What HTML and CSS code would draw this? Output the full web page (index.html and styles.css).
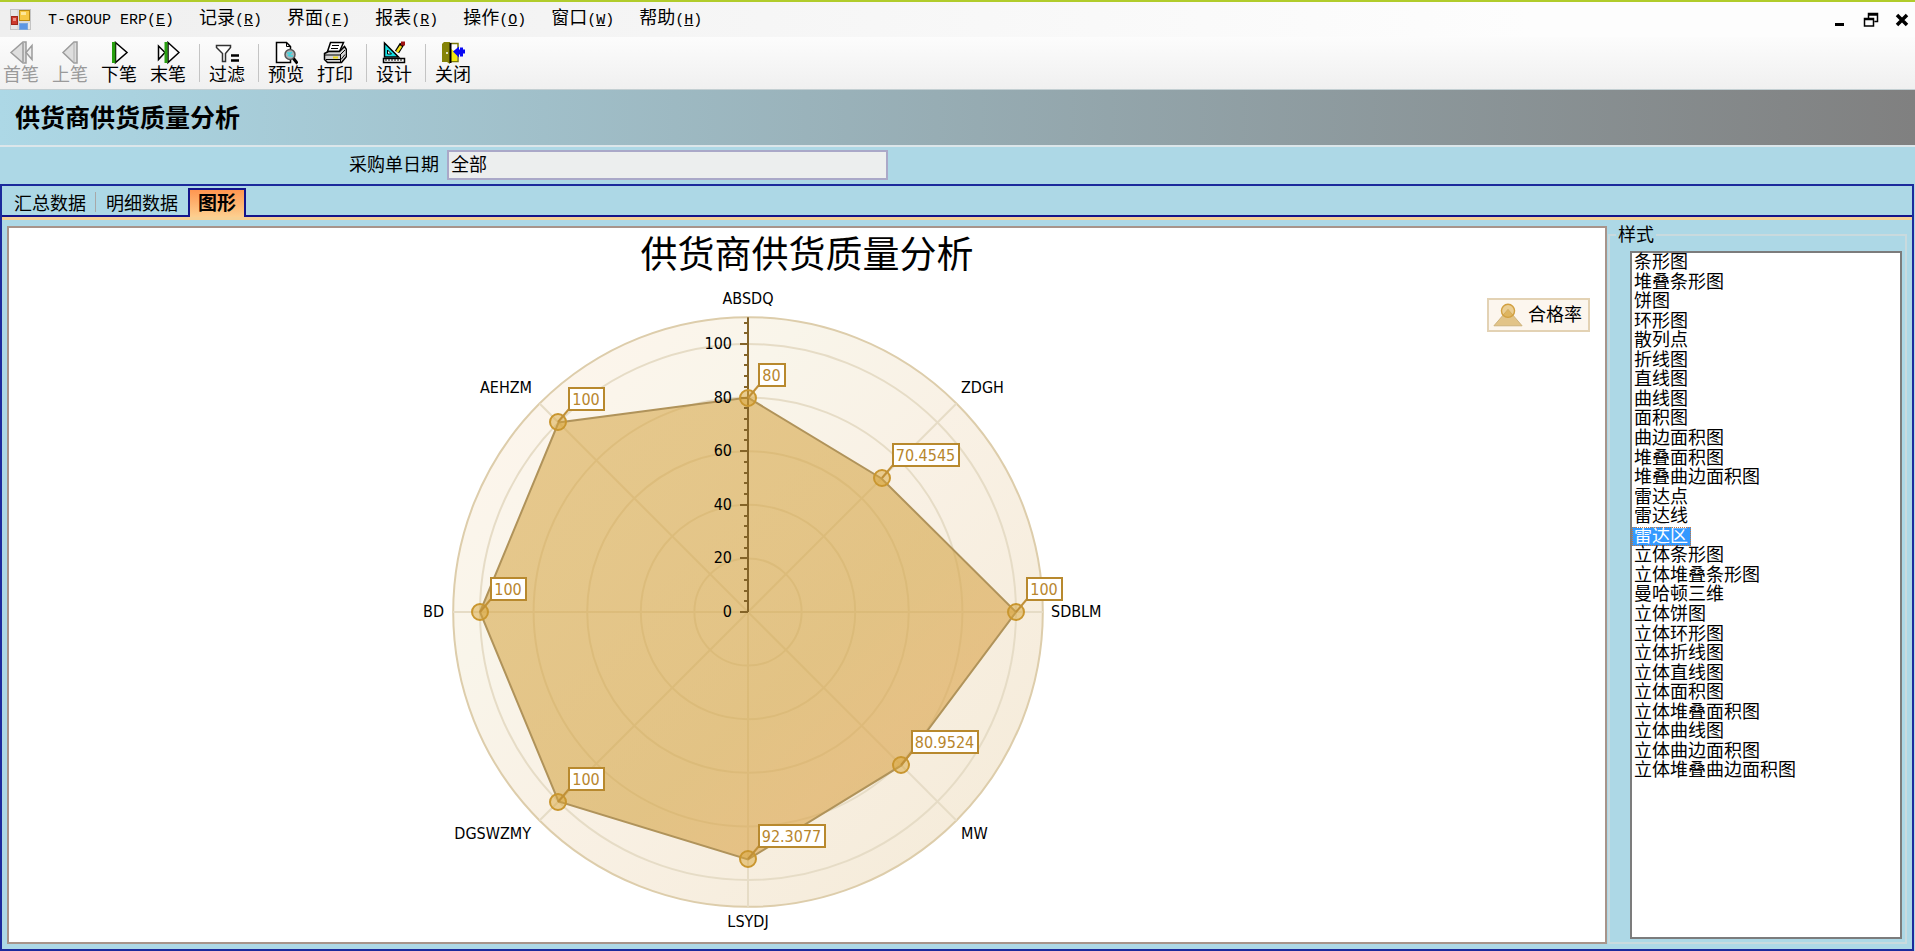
FILE: index.html
```html
<!DOCTYPE html>
<html lang="zh-CN">
<head>
<meta charset="utf-8">
<title>供货商供货质量分析</title>
<link rel="stylesheet" href="styles.css">
</head>
<body>
<header class="menubar">
  <svg class="app-icon" viewBox="0 0 22 22" aria-hidden="true">
    <rect x="0.5" y="0.5" width="20" height="20" fill="#e6e6e6" stroke="#c4c4c4"/>
    <path d="M8 1v20M1 13h19" stroke="#cfcfcf"/>
    <rect x="9.5" y="1.5" width="10" height="10" fill="#f6c844" stroke="#b98a12"/>
    <rect x="11" y="3" width="5" height="3" fill="#fde79a"/>
    <rect x="1.5" y="7.5" width="6" height="8" fill="#cc3a2c" stroke="#a12519"/>
    <rect x="3" y="9" width="3" height="3" fill="#ee8f84"/>
    <rect x="9.5" y="14.5" width="8" height="6" fill="#5c96e4" stroke="#7aa7de"/>
  </svg>
  <nav class="menu">
    <button class="menu-item"><span class="latin">T-GROUP ERP(<u>E</u>)</span></button>
    <button class="menu-item">记录<span class="latin">(<u>R</u>)</span></button>
    <button class="menu-item">界面<span class="latin">(<u>F</u>)</span></button>
    <button class="menu-item">报表<span class="latin">(<u>R</u>)</span></button>
    <button class="menu-item">操作<span class="latin">(<u>O</u>)</span></button>
    <button class="menu-item">窗口<span class="latin">(<u>W</u>)</span></button>
    <button class="menu-item">帮助<span class="latin">(<u>H</u>)</span></button>
  </nav>
  <div class="window-buttons">
    <button class="window-button" aria-label="最小化"><svg viewBox="0 0 16 16"><path d="M3 12.500h9" stroke="#000" stroke-width="3"/></svg></button>
    <button class="window-button" aria-label="还原"><svg viewBox="0 0 16 16"><path d="M5.500 6V1.500h9v8h-3M5 3h10M1.500 6.500h9v7.500h-9zM1 7.500h10" fill="none" stroke="#000" stroke-width="1.500"/></svg></button>
    <button class="window-button" aria-label="关闭"><svg viewBox="0 0 16 16"><path d="M3 3l10 10M13 3L3 13" stroke="#000" stroke-width="3.500"/></svg></button>
  </div>
</header>

<div class="toolbar" role="toolbar">
  <button class="tool" disabled>
    <svg viewBox="0 0 24 24"><path d="M2 11.500L14 1h3v21h-3z" fill="#dedede" stroke="#9c9c9c" stroke-width="1.500"/><path d="M14 2v19M23 4.500L17 11.500l6 7z" fill="#eee" stroke="#9c9c9c" stroke-width="1.500"/></svg>
    首笔
  </button>
  <button class="tool" disabled>
    <svg viewBox="0 0 24 24"><path d="M5 11.500L16 1h3v21h-3z" fill="#dedede" stroke="#9c9c9c" stroke-width="1.500"/><path d="M16 2v19" stroke="#b4b4b4"/></svg>
    上笔
  </button>
  <button class="tool">
    <svg viewBox="0 0 24 24"><path d="M8.500 1.500L20 11.500 8.500 21.500z" fill="#fff" stroke="#000" stroke-width="1.500"/><path d="M6.500 1v21" stroke="#28a010" stroke-width="3"/><path d="M8.500 1v21" stroke="#123f08"/></svg>
    下笔
  </button>
  <button class="tool">
    <svg viewBox="0 0 24 24"><path d="M2.500 5L9 11.500l-6.500 7z" fill="#fff" stroke="#000" stroke-width="1.500"/><path d="M12 1.500L23 11.500 12 21.500z" fill="#fff" stroke="#000" stroke-width="1.500"/><path d="M10 1v21" stroke="#28a010" stroke-width="3"/></svg>
    末笔
  </button>
  <span class="tool-separator"></span>
  <button class="tool">
    <svg viewBox="0 0 24 24"><path d="M1.500 4.500h14v2l-5 6v8h-3v-8l-6-6z" fill="#fff" stroke="#333" stroke-width="1.500"/><path d="M16 14.500h8M16 19.500h8" stroke="#000" stroke-width="2.500"/></svg>
    过滤
  </button>
  <span class="tool-separator"></span>
  <button class="tool">
    <svg viewBox="0 0 24 24"><path d="M2.500 1.500h10l4 4v16h-14z" fill="#fff" stroke="#000" stroke-width="1.500"/><path d="M12.500 1.500v4h4" fill="none" stroke="#000"/><circle cx="16" cy="13.500" r="5" fill="#a9b4b8" stroke="#555" stroke-width="1.500"/><path d="M13 12h3v3h3M14 15l4-4" stroke="#3fd6e0" stroke-width="1.500" fill="none"/><path d="M19.500 17.500l4 5" stroke="#000" stroke-width="3"/></svg>
    预览
  </button>
  <button class="tool">
    <svg viewBox="0 0 24 24"><path d="M7.500 1.500h13l-4 9h-12z" fill="#fff" stroke="#000" stroke-width="1.500"/><path d="M9 4.500h7M8 7.500h7" stroke="#000"/><path d="M1.500 12.500l4-2h11l5-5 2 3v7l-5 6h-14l-3-3z" fill="#d4d4d4" stroke="#000" stroke-width="1.500"/><path d="M2 14h15l5-5M3 18.500h15l4-5M17.500 14v7" fill="none" stroke="#000"/><path d="M10 16.500h5" stroke="#ecd91a" stroke-width="2"/></svg>
    打印
  </button>
  <span class="tool-separator"></span>
  <button class="tool">
    <svg viewBox="0 0 24 24"><path d="M2.500 2v14h14z" fill="#16dfe4" stroke="#000" stroke-width="1.500"/><path d="M5.500 9v4h4z" fill="#fff" stroke="#000"/><path d="M1.500 17.500h21v4h-21z" fill="#fff" stroke="#000" stroke-width="1.500"/><path d="M4 20v-2M7 20v-2M10 20v-2M13 20v-2M16 20v-2M19 20v-2" stroke="#000"/><path d="M15 11l5-8" stroke="#000" stroke-width="5"/><path d="M15 11l4-6" stroke="#f3df1c" stroke-width="2.500"/><path d="M19 2.500h4" stroke="#a01212" stroke-width="4"/></svg>
    设计
  </button>
  <span class="tool-separator"></span>
  <button class="tool">
    <svg viewBox="0 0 24 24"><path d="M8 2.500h9v18h-9z" fill="#fff" stroke="#7c7a08" stroke-width="1.500"/><path d="M10 8l6 4v8h-6z" fill="#f2ea10"/><path d="M1 3l2-2h6v22l-3-2H1z" fill="#858307"/><path d="M9.500 2v20" stroke="#000" stroke-width="2"/><circle cx="6" cy="12" r="1" fill="#fff"/><path d="M12 10.500l6-5v3h1v-2h3v2h2v4h-2v3h-3v-2h-1v3z" fill="#0808f4"/></svg>
    关闭
  </button>
</div>

<section class="banner"><h1 class="banner-title">供货商供货质量分析</h1></section>

<form class="filter">
  <label class="filter-label" for="order-date">采购单日期</label>
  <input class="filter-input" id="order-date" type="text" value="全部" readonly>
</form>

<main class="tabs">
  <div class="tab-strip" role="tablist">
    <button class="tab" role="tab" aria-selected="false">汇总数据</button>
    <button class="tab" role="tab" aria-selected="false">明细数据</button>
    <button class="tab tab-active" role="tab" aria-selected="true">图形</button>
  </div>
  <div class="tab-body">
    <section class="chart">
      <h2 class="chart-title">供货商供货质量分析</h2>
      <div class="chart-body">
        <svg class="plot" id="plot" viewBox="-340 -328 680 657" role="img" aria-label="合格率雷达图">
          <defs>
            <linearGradient id="disc" x1="0" y1="0" x2="1" y2="1">
              <stop offset="0.100" stop-color="#fdf5ec"/>
              <stop offset="0.300" stop-color="#f9f5ea"/>
              <stop offset="0.500" stop-color="#f9f1e5"/>
              <stop offset="1" stop-color="#f4ead7"/>
            </linearGradient>
            <linearGradient id="area" x1="0" y1="0" x2="1" y2="1">
              <stop offset="0" stop-color="#d9aa4e"/>
              <stop offset="0.600" stop-color="#d4a546"/>
              <stop offset="0.750" stop-color="#daa349"/>
              <stop offset="1" stop-color="#d1a546"/>
            </linearGradient>
          </defs>
        </svg>
        <div class="legend">
          <svg class="legend-icon" viewBox="0 0 32 26" aria-hidden="true">
            <path d="M1 24.500L16 7l15 17.500z" fill="#e2c488" stroke="#cbb07a"/>
            <circle cx="16" cy="8.500" r="7" fill="#daa537" fill-opacity="0.500" stroke="#d2a040" stroke-width="1.500"/>
          </svg>
          合格率
        </div>
      </div>
    </section>
    <fieldset class="styles">
      <legend class="styles-legend">样式</legend>
      <ul class="style-list" role="listbox" aria-label="样式">
        <li><button class="style-item">条形图</button></li>
        <li><button class="style-item">堆叠条形图</button></li>
        <li><button class="style-item">饼图</button></li>
        <li><button class="style-item">环形图</button></li>
        <li><button class="style-item">散列点</button></li>
        <li><button class="style-item">折线图</button></li>
        <li><button class="style-item">直线图</button></li>
        <li><button class="style-item">曲线图</button></li>
        <li><button class="style-item">面积图</button></li>
        <li><button class="style-item">曲边面积图</button></li>
        <li><button class="style-item">堆叠面积图</button></li>
        <li><button class="style-item">堆叠曲边面积图</button></li>
        <li><button class="style-item">雷达点</button></li>
        <li><button class="style-item">雷达线</button></li>
        <li><button class="style-item style-item-selected">雷达区</button></li>
        <li><button class="style-item">立体条形图</button></li>
        <li><button class="style-item">立体堆叠条形图</button></li>
        <li><button class="style-item">曼哈顿三维</button></li>
        <li><button class="style-item">立体饼图</button></li>
        <li><button class="style-item">立体环形图</button></li>
        <li><button class="style-item">立体折线图</button></li>
        <li><button class="style-item">立体直线图</button></li>
        <li><button class="style-item">立体面积图</button></li>
        <li><button class="style-item">立体堆叠面积图</button></li>
        <li><button class="style-item">立体曲线图</button></li>
        <li><button class="style-item">立体曲边面积图</button></li>
        <li><button class="style-item">立体堆叠曲边面积图</button></li>
      </ul>
    </fieldset>
  </div>
</main>
<script src="chart.js"></script>
</body>
</html>
```

FILE: styles.css
```css
* { box-sizing: border-box; }

body {
  margin: 0;
  min-height: 100vh;
  display: flex;
  flex-direction: column;
  background: #add8e6;
  color: #000;
  font: 18px/20px "Liberation Sans", "Noto Sans CJK SC", sans-serif;
}

button {
  margin: 0;
  padding: 0;
  border: 0;
  background: none;
  color: inherit;
  font: inherit;
  white-space: nowrap;
}

.menubar {
  display: flex;
  align-items: center;
  height: 37px;
  padding: 0 0 0 10px;
  border-top: 2px solid #b1cc2b;
  background: linear-gradient(90deg, #efefef, #fdfdfd 80%);
}
.app-icon { width: 22px; height: 22px; }
.menu { display: flex; gap: 25px; margin-left: 16px; }
.latin { font: 15px/20px "Liberation Mono", monospace; }
.window-buttons { display: flex; gap: 15px; margin-left: auto; padding-right: 5px; }
.window-button { width: 16px; height: 16px; }
.window-button svg { display: block; width: 16px; height: 16px; }

.toolbar {
  display: flex;
  align-items: center;
  gap: 9px;
  height: 53px;
  padding-left: 1px;
  border-bottom: 1px solid #c3cfd2;
  background: linear-gradient(#fcfcfc, #f0f0f0);
}
.tool {
  display: flex;
  flex-direction: column;
  align-items: center;
  width: 40px;
  line-height: 20px;
}
.tool:disabled { color: #9a9a9a; }
.tool svg { width: 24px; height: 24px; }
.tool-separator { width: 1px; height: 38px; margin: 0 -2px 0 2px; background: #c4c4c4; }

.banner {
  display: flex;
  align-items: center;
  height: 57px;
  padding-left: 15px;
  border-bottom: 2px solid #dce6ea;
  background: linear-gradient(90deg, #add8e6, #808080);
}
.banner-title { margin: 0; font-size: 25px; line-height: 32px; font-weight: 700; }

.filter {
  display: flex;
  align-items: center;
  gap: 8px;
  height: 37px;
  padding: 0 0 2px 349px;
}
.filter-label { width: 90px; }
.filter-input {
  width: 441px;
  height: 30px;
  padding: 0 2px 4px;
  border: 2px solid #aaa8c8;
  background: #eceeee;
  color: #000;
  font: inherit;
}

.tabs {
  flex: 1;
  display: flex;
  flex-direction: column;
  margin-right: 1px;
  border: 2px solid #1c2a9c;
}
.tab-strip {
  display: flex;
  align-items: flex-end;
  height: 34px;
  padding-top: 3px;
  border-bottom: 3px solid #f6d094;
  box-shadow: inset 0 -2px #14148a;
}
.tab { height: 29px; padding: 2px 10px 0; }
.tab:first-child {
  padding-left: 12px;
  background: linear-gradient(#a8a8a8, #a8a8a8) right 4px / 1px 20px no-repeat;
}
.tab.tab-active {
  height: 29px;
  padding: 0 8px;
  border: 2px solid #14148a;
  border-bottom: 0;
  background: linear-gradient(#ff9650, #fdcf8f);
  font-size: 19px;
  font-weight: 700;
}
.tab-body {
  flex: 1;
  display: flex;
  gap: 1px;
  padding: 6px 5px 5px;
}

.chart {
  flex: 1;
  display: flex;
  flex-direction: column;
  border: 2px solid #a8948a;
  background: #fff;
}
.chart-title {
  margin: 0;
  font-size: 37px;
  line-height: 56px;
  font-weight: 400;
  text-align: center;
}
.chart-body {
  flex: 1;
  display: flex;
  align-items: flex-start;
  padding-right: 15px;
}
.plot { flex: 1; height: 657px; font: 16px "DejaVu Sans Condensed", "DejaVu Sans", sans-serif; }
.legend {
  display: flex;
  align-items: center;
  gap: 5px;
  height: 34px;
  margin-top: 14px;
  padding: 0 6px 0 4px;
  border: 2px solid #e3d2b4;
  background: #fcf6ee;
}
.legend-icon { width: 30px; height: 26px; }

.disc { fill: url(#disc); stroke: #ddcdab; stroke-width: 2; }
.grid { fill: none; stroke: #e6dcc6; stroke-width: 2; }
.area { fill: url(#area); fill-opacity: 0.6; stroke: #b0935a; stroke-width: 2; }
.axis { fill: none; stroke: #846428; stroke-width: 2; }
.leader { stroke: #c09038; stroke-width: 2; }
.marker { fill: #daa537; fill-opacity: 0.5; stroke: #c9962f; stroke-width: 2; }
.value-box { fill: #fff; stroke: #b8892e; stroke-width: 2; }
.value { fill: #b8862c; }

.styles {
  display: flex;
  width: 299px;
  min-width: 0;
  margin: 0;
  padding: 7px 3px 3px 20px;
  border: 2px solid #c9dade;
}
.styles-legend { margin-left: -14px; padding: 0 2px; line-height: 18px; }
.style-list {
  flex: 1;
  display: grid;
  grid-template-rows: repeat(27, 1fr) 156px;
  margin: 0;
  padding: 0;
  border: 2px solid #7c7c7c;
  background: #fff;
  list-style: none;
}
.style-item { display: block; height: 19px; padding: 0 3px 0 2px; line-height: 19px; }
.style-item-selected { background: #3399ff; color: #fff; outline: 1px dotted #c8783c; outline-offset: -1px; }
```

FILE: chart.js
```js
const plot = document.getElementById("plot");
const unit = 2.68;

const points = [
  { name: "ABSDQ", value: 80, x: 0, y: -308, anchor: "middle" },
  { name: "ZDGH", value: 70.4545, x: 213, y: -219, anchor: "start" },
  { name: "SDBLM", value: 100, x: 303, y: 5, anchor: "start" },
  { name: "MW", value: 80.9524, x: 213, y: 227, anchor: "start" },
  { name: "LSYDJ", value: 92.3077, x: 0, y: 315, anchor: "middle" },
  { name: "DGSWZMY", value: 100, x: -217, y: 227, anchor: "end" },
  { name: "BD", value: 100, x: -304, y: 5, anchor: "end" },
  { name: "AEHZM", value: 100, x: -216, y: -219, anchor: "end" }
];

function add(tag, className, attributes, text) {
  const node = document.createElementNS("http://www.w3.org/2000/svg", tag);
  if (className) node.setAttribute("class", className);
  for (const key in attributes) node.setAttribute(key, attributes[key]);
  if (text !== undefined) node.textContent = text;
  plot.appendChild(node);
}

function place(index, value) {
  const angle = index * Math.PI / 4;
  return [Math.sin(angle) * value * unit, -Math.cos(angle) * value * unit];
}

add("circle", "disc", { r: 110 * unit });
for (let v = 20; v <= 100; v += 20) add("circle", "grid", { r: v * unit });
points.forEach((p, i) => {
  const [x, y] = place(i, 110);
  add("line", "grid", { x2: x, y2: y });
});

add("polygon", "area", { points: points.map((p, i) => place(i, p.value).join(",")).join(" ") });

let axis = "M0 0V" + -110 * unit;
for (let v = 0; v <= 108; v += 4) axis += "M0 " + Math.round(-v * unit) + "h" + (v % 20 ? -4 : -8);
add("path", "axis", { d: axis });
for (let v = 0; v <= 100; v += 20) {
  add("text", "", { x: -16, y: Math.round(-v * unit) + 5, "text-anchor": "end" }, v);
}

points.forEach((p, i) => {
  const [x, y] = place(i, p.value).map(Math.round);
  const label = String(p.value);
  const width = label.length === 7 ? 67 : 9 + label.length * 9;
  add("circle", "marker", { cx: x, cy: y, r: 8 });
  add("line", "leader", { x1: x, y1: y, x2: x + 11, y2: y - 13 });
  add("rect", "value-box", { x: x + 11, y: y - 34, width: width - 1, height: 22 });
  add("text", "value", { x: x + 10 + width / 2, y: y - 17, "text-anchor": "middle" }, label);
  add("text", "", { x: p.x, y: p.y, "text-anchor": p.anchor }, p.name);
});
```
